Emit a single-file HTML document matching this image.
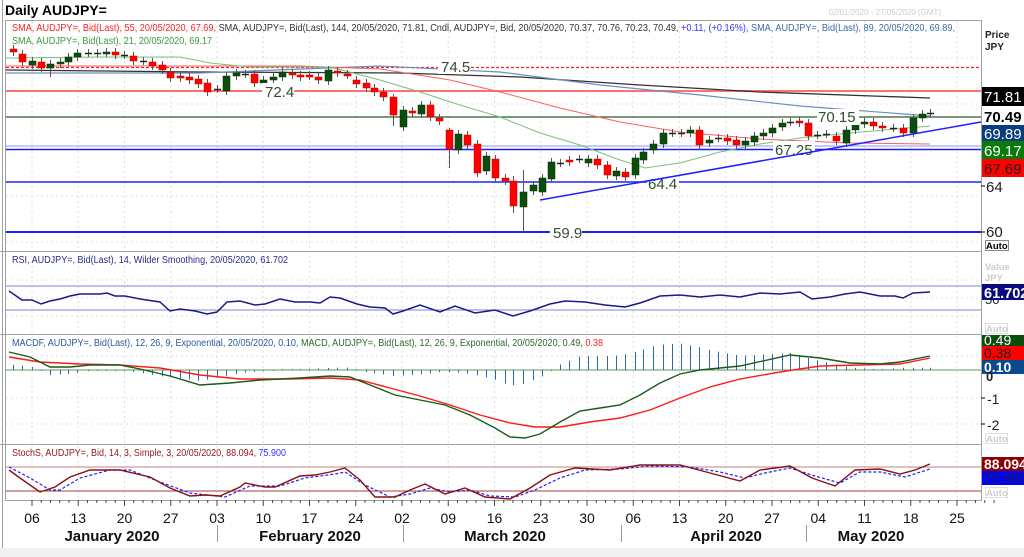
<!DOCTYPE html>
<html><head><meta charset="utf-8"><style>
html,body{margin:0;padding:0;background:#fff;}
svg{display:block;font-family:"Liberation Sans",sans-serif;}
</style></head><body>
<svg id="s" width="1024" height="557" viewBox="0 0 1024 557" xmlns="http://www.w3.org/2000/svg">
<rect width="1024" height="557" fill="#fff"/>
<text x="5" y="15" font-size="14" font-weight="bold" fill="#000">Daily AUDJPY=</text>
<text x="941" y="15" font-size="8" fill="#ccc" text-anchor="end">02/01/2020 - 27/05/2020 (GMT)</text>
<g id="grid"></g>
<g stroke="#a0a0a0" fill="none">
<rect x="5.5" y="20.5" width="976" height="480"/>
<line x1="0" y1="251.5" x2="1024" y2="251.5"/>
<line x1="0" y1="334.5" x2="1024" y2="334.5"/>
<line x1="0" y1="444.5" x2="1024" y2="444.5"/>
<line x1="2.5" y1="0" x2="2.5" y2="557"/>
</g>
<rect x="0" y="548" width="1024" height="9" fill="#f0f0f0"/>
<text font-size="10" y="31" x="12" textLength="943" lengthAdjust="spacingAndGlyphs"><tspan fill="#ff2020">SMA, AUDJPY=, Bid(Last),  55, 20/05/2020, 67.69, </tspan><tspan fill="#333">SMA, AUDJPY=, Bid(Last),  144, 20/05/2020, 71.81, Cndl, AUDJPY=, Bid, 20/05/2020, 70.37, 70.76, 70.23, 70.49, </tspan><tspan fill="#3333ff">+0.11, (+0.16%), </tspan><tspan fill="#3a6ea5">SMA, AUDJPY=, Bid(Last),  89, 20/05/2020, 69.89,</tspan></text>
<text font-size="10" y="44" x="12" fill="#3a9a3a" textLength="200" lengthAdjust="spacingAndGlyphs">SMA, AUDJPY=, Bid(Last),  21, 20/05/2020, 69.17</text>
<text font-size="10" y="263" x="12" fill="#2a2a8a" textLength="276" lengthAdjust="spacingAndGlyphs">RSI, AUDJPY=, Bid(Last),  14, Wilder Smoothing, 20/05/2020, 61.702</text>
<text font-size="10" y="346" x="12" textLength="591" lengthAdjust="spacingAndGlyphs"><tspan fill="#2a5a9a">MACDF, AUDJPY=, Bid(Last),  12, 26, 9, Exponential, 20/05/2020, 0.10, </tspan><tspan fill="#2a6a2a">MACD, AUDJPY=, Bid(Last),  12, 26, 9, Exponential, 20/05/2020, 0.49, </tspan><tspan fill="#ff2020">0.38</tspan></text>
<text font-size="10" y="456" x="12" textLength="274" lengthAdjust="spacingAndGlyphs"><tspan fill="#8b1a1a">StochS, AUDJPY=, Bid,  14, 3, Simple, 3, 20/05/2020, 88.094, </tspan><tspan fill="#3333ff">75.900</tspan></text>
<g>
<line x1="6" y1="67.5" x2="981" y2="67.5" stroke="#ff2020" stroke-width="1.2" stroke-dasharray="3,2"/>
<line x1="6" y1="91" x2="981" y2="91" stroke="#ff7070" stroke-width="2"/>
<line x1="6" y1="117" x2="981" y2="117" stroke="#2f5a2f" stroke-width="1.3"/>
<line x1="6" y1="146" x2="981" y2="146" stroke="#b0b8ff" stroke-width="1.5"/>
<line x1="6" y1="149.5" x2="981" y2="149.5" stroke="#2020ff" stroke-width="1.5"/>
<line x1="6" y1="182" x2="981" y2="182" stroke="#2020ff" stroke-width="1.5"/>
<line x1="6" y1="232" x2="981" y2="232" stroke="#2020ff" stroke-width="2"/>
</g>
<g id="ma" fill="none"></g>
<g id="cdl"></g>
<g font-size="15" fill="#2f4f2f">
<rect x="438" y="58" width="32" height="16" fill="#fff"/><text x="441" y="72">74.5</text>
<rect x="262" y="83" width="32" height="16" fill="#fff"/><text x="265" y="97">72.4</text>
<rect x="817" y="109" width="42" height="16" fill="#fff"/><text x="818" y="122">70.15</text>
<rect x="773" y="141" width="42" height="16" fill="#fff"/><text x="775" y="155">67.25</text>
<rect x="647" y="174" width="32" height="16" fill="#fff"/><text x="648" y="189">64.4</text>
<rect x="550" y="224" width="32" height="16" fill="#fff"/><text x="553" y="238">59.9</text>
</g>
<line x1="540" y1="200" x2="981" y2="122" stroke="#2020ff" stroke-width="1.5"/>
<g id="sub" fill="none"></g>
<rect x="982" y="21" width="42" height="527" fill="#fff"/>
<line x1="981.5" y1="20" x2="981.5" y2="500" stroke="#a0a0a0"/>
<g font-size="10" font-weight="bold" fill="#222"><text x="985" y="38">Price</text><text x="985" y="50">JPY</text></g>
<rect x="982" y="87" width="42" height="19" fill="#000"/><text x="984" y="102" font-size="15" fill="#fff">71.81</text>
<rect x="982" y="107" width="42" height="18" fill="#fff"/><text x="984" y="122" font-size="15" font-weight="bold" fill="#000">70.49</text>
<rect x="982" y="125" width="42" height="16" fill="#0a3d7d"/><text x="984" y="139" font-size="15" fill="#fff">69.89</text>
<rect x="982" y="141" width="42" height="18" fill="#0a7a0a"/><text x="984" y="156" font-size="15" fill="#fff">69.17</text>
<rect x="982" y="159" width="42" height="18" fill="#ff0000"/><text x="984" y="174" font-size="15" fill="#222">67.69</text>
<line x1="981" y1="186" x2="985" y2="186" stroke="#000"/><text x="986" y="192" font-size="15" fill="#222">64</text>
<line x1="981" y1="232" x2="985" y2="232" stroke="#000"/><text x="986" y="237" font-size="15" fill="#222">60</text>
<rect x="985.5" y="240.5" width="23" height="10" fill="#fff" stroke="#888"/><text x="986" y="249" font-size="9.5" font-weight="bold" fill="#000">Auto</text>
<g font-size="9.5" font-weight="bold" fill="#ccc"><text x="985" y="270">Value</text><text x="985" y="281">JPY</text></g>
<text x="985" y="304" font-size="13" fill="#222">50</text>
<rect x="982" y="284" width="42" height="16" fill="#0a0a80"/><text x="984" y="298" font-size="14.5" font-weight="bold" fill="#fff">61.702</text>
<rect x="985.5" y="323.5" width="22" height="10" fill="#fff" stroke="#ddd"/><text x="986" y="332" font-size="9.5" font-weight="bold" fill="#ccc">Auto</text>
<rect x="982" y="335" width="42" height="11" fill="#0b4d0b"/><text x="984" y="345" font-size="14" fill="#fff">0.49</text>
<rect x="982" y="346" width="42" height="14" fill="#ff0000"/><text x="984" y="358" font-size="14" fill="#222">0.38</text>
<rect x="982" y="360" width="42" height="14" fill="#0a4a8a"/><text x="984" y="372" font-size="14" font-weight="bold" fill="#fff">0.10</text>
<text x="986" y="381" font-size="13" font-weight="bold" fill="#222">0</text>
<line x1="981" y1="398" x2="985" y2="398" stroke="#000"/><text x="987" y="404" font-size="14" fill="#222">-1</text>
<line x1="981" y1="424" x2="985" y2="424" stroke="#000"/><text x="987" y="430" font-size="14" fill="#222">-2</text>
<rect x="985.5" y="433.5" width="22" height="10" fill="#fff" stroke="#ddd"/><text x="986" y="442" font-size="9.5" font-weight="bold" fill="#ccc">Auto</text>
<rect x="982" y="457" width="42" height="14" fill="#8b0000"/><text x="984" y="469" font-size="14" font-weight="bold" fill="#fff">88.094</text>
<rect x="982" y="471" width="42" height="14" fill="#0000ff"/><text x="984" y="483" font-size="14" fill="#222">75.900</text>
<rect x="985.5" y="487.5" width="22" height="10" fill="#fff" stroke="#ddd"/><text x="986" y="496" font-size="9.5" font-weight="bold" fill="#ccc">Auto</text>
<g id="dax" font-size="14" fill="#111" text-anchor="middle"></g>
<g font-size="15" font-weight="bold" fill="#111" text-anchor="middle">
<text x="112" y="541">January 2020</text>
<text x="310" y="541">February 2020</text>
<text x="505" y="541">March 2020</text>
<text x="726" y="541">April 2020</text>
<text x="871" y="541">May 2020</text>
</g>
<g stroke="#999"><line x1="217.5" y1="525" x2="217.5" y2="542"/><line x1="403.5" y1="525" x2="403.5" y2="542"/><line x1="621.5" y1="525" x2="621.5" y2="542"/><line x1="806.5" y1="525" x2="806.5" y2="542"/></g>
</svg>
<script>
var NS="http://www.w3.org/2000/svg";
function el(p,t,a){var e=document.createElementNS(NS,t);for(var k in a)e.setAttribute(k,a[k]);p.appendChild(e);return e;}
var g=document.getElementById('grid');
var days=["06","13","20","27","03","10","17","24","02","09","16","23","30","06","13","20","27","04","11","18","25"];
var dax=document.getElementById('dax');
for(var i=0;i<days.length;i++){var x=32+i*46.25;
 el(g,'line',{x1:x,y1:21,x2:x,y2:500,stroke:'#ddd','stroke-dasharray':'2,3'});
 var t=el(dax,'text',{x:x,y:523});t.textContent=days[i];
 for(var d=0;d<5;d++){var xx=x+d*9.25;el(dax,'line',{x1:xx,y1:500,x2:xx,y2:d?503:506,stroke:'#444'});}
}
[58,104,150,196,242,280,298,316,356,398,424,467,491].forEach(function(y){el(g,'line',{x1:6,y1:y,x2:981,y2:y,stroke:'#e2e2e2','stroke-dasharray':'2,3'});});
function pl(p,pts,a){var s=pts.map(function(q){return q[0]+','+q[1]}).join(' ');a.points=s;a.fill='none';return el(p,'polyline',a);}
var ma=document.getElementById('ma');
pl(ma,[[6,70],[200,72],[400,73],[520,77],[640,85],[760,92],[930,98]],{stroke:'#333','stroke-width':1.3});
pl(ma,[[6,73],[200,73],[380,66],[500,72],[600,85],[700,95],[800,106],[930,116]],{stroke:'#6a8fc0','stroke-width':1.2});
pl(ma,[[6,66],[200,66],[300,66],[380,69],[450,80],[500,92],[560,108],[620,122],[680,132],[760,139],[850,143],[930,144]],{stroke:'#ff6060','stroke-width':1});
pl(ma,[[6,58],[100,57],[180,57],[210,63],[250,67],[330,67],[380,80],[420,92],[460,105],[500,117],[540,133],[580,145],[620,160],[645,168],[680,163],[720,152],[760,144],[800,138],[850,133],[930,126]],{stroke:'#7cc07c','stroke-width':1});
var C=[[13,49,52,'r'],[22,54,62,'r'],[32,61,65,'g'],[41,62,68,'r'],[50,64,68,'g',60,77],[60,62,64,'g'],[68,57,62,'g'],[77,53,57,'g'],[88,53,53,'c'],[97,53,53,'c'],[106,52,53,'g'],[115,52,55,'r'],[124,55,55,'c'],[133,56,61,'r'],[143,61,61,'c'],[152,62,66,'r'],[162,65,70,'r'],[170,72,78,'r'],[180,76,78,'r'],[189,77,80,'r'],[198,79,84,'r'],[207,83,92,'r'],[217,89,89,'c'],[226,76,91,'g'],[236,73,76,'g'],[245,74,74,'c'],[254,74,83,'r'],[263,80,83,'g'],[273,77,80,'g'],[282,72,77,'g'],[292,73,75,'r'],[300,75,77,'r'],[309,75,76,'r'],[318,77,80,'r'],[328,70,81,'g'],[337,71,73,'r'],[347,74,75,'r'],[356,80,84,'r'],[366,83,88,'r'],[374,88,92,'r'],[383,92,97,'r'],[393,97,115,'r',94,126],[403,110,127,'g'],[412,111,113,'r'],[421,105,114,'g'],[430,105,117,'r'],[439,118,121,'r'],[449,130,149,'r',128,168],[458,134,150,'g'],[467,135,145,'r'],[477,144,173,'r'],[486,156,171,'g'],[495,159,178,'r'],[505,178,181,'r'],[513,181,206,'r',176,213],[523,192,207,'g',170,232],[533,185,191,'g'],[542,178,192,'g'],[551,162,179,'g'],[560,163,163,'c'],[569,160,162,'r'],[579,159,159,'c'],[588,159,163,'g'],[597,159,165,'r'],[607,165,175,'r'],[616,171,176,'g'],[625,172,177,'r'],[635,158,175,'g'],[643,152,160,'g'],[653,144,150,'g'],[663,133,144,'g'],[672,133,133,'c'],[681,133,133,'c'],[690,130,133,'g'],[699,130,145,'r'],[709,140,143,'g'],[718,138,138,'c'],[727,138,141,'r'],[736,140,145,'r'],[745,141,145,'g'],[754,136,142,'g'],[763,133,136,'g'],[772,128,133,'g'],[782,123,127,'g'],[790,122,122,'c'],[799,121,123,'r'],[808,123,136,'r'],[817,135,135,'c'],[826,134,134,'c'],[836,136,141,'r'],[846,130,143,'g'],[855,124,130,'g'],[864,122,124,'g'],[873,122,126,'r'],[882,126,128,'r'],[893,128,128,'c'],[903,128,133,'r'],[913,118,133,'g'],[922,114,118,'g'],[930,113,113,'c']];
var cg=document.getElementById('cdl');
C.forEach(function(c){var x=c[0],t=c[1],b=c[2],ty=c[3];var wt=c[4]||t-4,wb=c[5]||b+4;
 el(cg,'line',{x1:x+.5,y1:wt,x2:x+.5,y2:wb,stroke:'#555'});
 if(ty=='c'){el(cg,'line',{x1:x-3,y1:t+.5,x2:x+4,y2:t+.5,stroke:'#222','stroke-width':1.5});}
 else el(cg,'rect',{x:x-3,y:t,width:7,height:Math.max(b-t,2),fill:ty=='g'?'#0b4d0b':'#ff0000',stroke:ty=='g'?'#063006':'#cc0000','stroke-width':.5});
});
var sub=document.getElementById('sub');
el(sub,'line',{x1:6,y1:286,x2:981,y2:286,stroke:'#8080d0'});
el(sub,'line',{x1:6,y1:310,x2:981,y2:310,stroke:'#8080d0'});
pl(sub,[[9,291],[22,300],[32,300],[41,304],[50,301],[60,299],[70,296],[80,294],[100,294],[107,293],[115,296],[125,296],[140,299],[160,302],[170,311],[180,309],[195,311],[207,314],[217,312],[227,302],[240,301],[255,305],[265,304],[280,299],[295,302],[310,302],[320,303],[330,297],[340,298],[357,304],[370,307],[385,308],[393,314],[403,311],[420,305],[440,312],[455,306],[475,313],[495,310],[513,316],[530,311],[550,304],[565,301],[585,302],[605,305],[625,307],[640,303],[660,296],[680,295],[700,297],[720,295],[740,297],[760,293],[780,294],[800,292],[812,299],[830,297],[845,294],[860,292],[880,296],[895,296],[903,298],[913,293],[930,292]],{stroke:'#1a1a8a','stroke-width':1.5});
el(sub,'line',{x1:6,y1:370,x2:981,y2:370,stroke:'#5a9a5a'});
var M=[[9,352],[30,357],[50,367],[70,367],[90,365],[120,365],[140,369],[170,376],[200,385],[230,383],[260,380],[300,378],[330,376],[350,377],[370,385],[395,395],[420,400],[445,405],[470,415],[495,428],[510,437],[525,438],[540,434],[560,422],[580,411],[600,408],[620,405],[640,395],[660,383],[680,374],[700,370],[740,366],[790,355],[820,358],[850,363],[880,364],[900,362],[930,356]];
var S=[[9,357],[40,362],[80,364],[120,365],[160,368],[200,375],[240,379],[290,379],[330,378],[360,380],[390,388],[420,396],[450,405],[480,415],[510,423],[535,427],[560,427],[590,422],[620,418],[650,410],[680,398],[710,387],[740,379],[780,372],[820,366],[860,365],[900,364],[930,358]];
function yAt(P,x){for(var i=1;i<P.length;i++){if(x<=P[i][0]){var a=P[i-1],b=P[i];return a[1]+(b[1]-a[1])*(x-a[0])/(b[0]-a[0]);}}return P[P.length-1][1];}
for(var k=0;k<C.length;k++){var x=C[k][0];var h=(yAt(S,x)-yAt(M,x))*1.1;if(Math.abs(h)<1)h=h<0?-1:1;el(sub,'line',{x1:x+.5,y1:370,x2:x+.5,y2:370-h,stroke:'#2a6aaa'});}
pl(sub,S,{stroke:'#ff1a1a','stroke-width':1.4});
pl(sub,M,{stroke:'#1a5a1a','stroke-width':1.4});
el(sub,'line',{x1:6,y1:467,x2:981,y2:467,stroke:'#c08080'});
el(sub,'line',{x1:6,y1:491,x2:981,y2:491,stroke:'#a04040'});
pl(sub,[[9,467],[30,478],[50,490],[60,490],[80,478],[110,470],[130,470],[160,482],[190,493],[225,497],[250,486],[280,486],[305,478],[335,474],[345,472],[365,485],[390,497],[410,494],[430,488],[450,492],[470,490],[490,496],[515,497],[535,490],[560,478],[585,470],[620,469],[650,466],[690,467],[720,472],[745,478],[765,473],[790,468],[815,476],[840,483],[860,472],[880,472],[905,477],[930,469]],{stroke:'#2020ff','stroke-width':1.2,'stroke-dasharray':'3,2'});
pl(sub,[[9,470],[20,478],[40,492],[55,487],[70,477],[90,470],[120,470],[150,477],[170,488],[190,496],[205,495],[220,496],[240,487],[245,483],[265,487],[275,487],[300,476],[315,475],[330,472],[345,468],[360,480],[375,497],[395,497],[410,490],[425,484],[445,494],[465,488],[485,497],[510,499],[530,488],[550,475],[575,468],[610,470],[640,465],[680,465],[710,473],[740,481],[760,470],[790,466],[812,478],[835,486],[855,470],[880,469],[900,474],[915,470],[930,464]],{stroke:'#8b1010','stroke-width':1.4});
</script>
</body></html>
